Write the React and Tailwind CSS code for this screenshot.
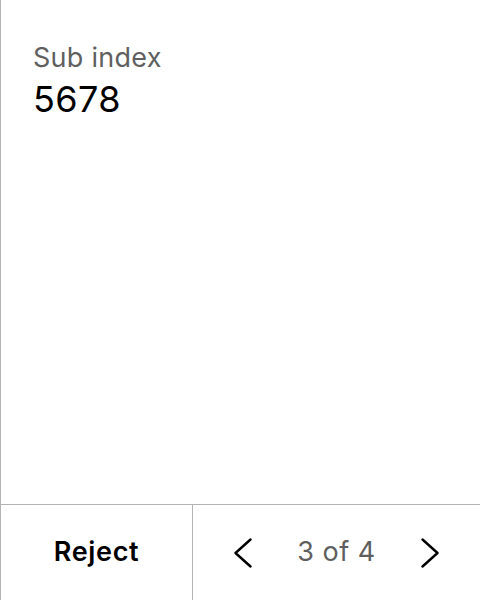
import React from "react";

function Chevron({ dir }) {
  return (
    <svg width="18" height="30" viewBox="0 0 18 30" fill="none" stroke="#000" strokeWidth="2.4" strokeLinecap="round" strokeLinejoin="round">
      {dir === "left" ? <path d="M16.5 1.5 L1.5 15 L16.5 28.5" /> : <path d="M1.5 1.5 L16.5 15 L1.5 28.5" />}
    </svg>
  );
}

export default function App() {
  return (
    <div className="h-[600px] w-[480px] flex flex-col bg-white border-l border-[#b3b3b3] font-['Inter',sans-serif]">
      <div className="flex-1 px-8 pt-[42px]">
        <div className="text-[27px] leading-8 tracking-[0.01em] text-[#5f5f5f]">Sub index</div>
        <div className="mt-[5px] text-[36px] leading-10 tracking-[0.01em] text-black">5678</div>
      </div>
      <div className="h-24 flex border-t border-[#b3b3b3]">
        <button className="w-48 flex items-center justify-center text-[27px] font-semibold tracking-[0.025em] text-black border-r border-[#b3b3b3]">
          Reject
        </button>
        <div className="flex-1 flex items-center justify-center gap-[45px]">
          <Chevron dir="left" />
          <span className="text-[27px] tracking-[0.02em] text-[#5f5f5f]">3 of 4</span>
          <Chevron dir="right" />
        </div>
      </div>
    </div>
  );
}
